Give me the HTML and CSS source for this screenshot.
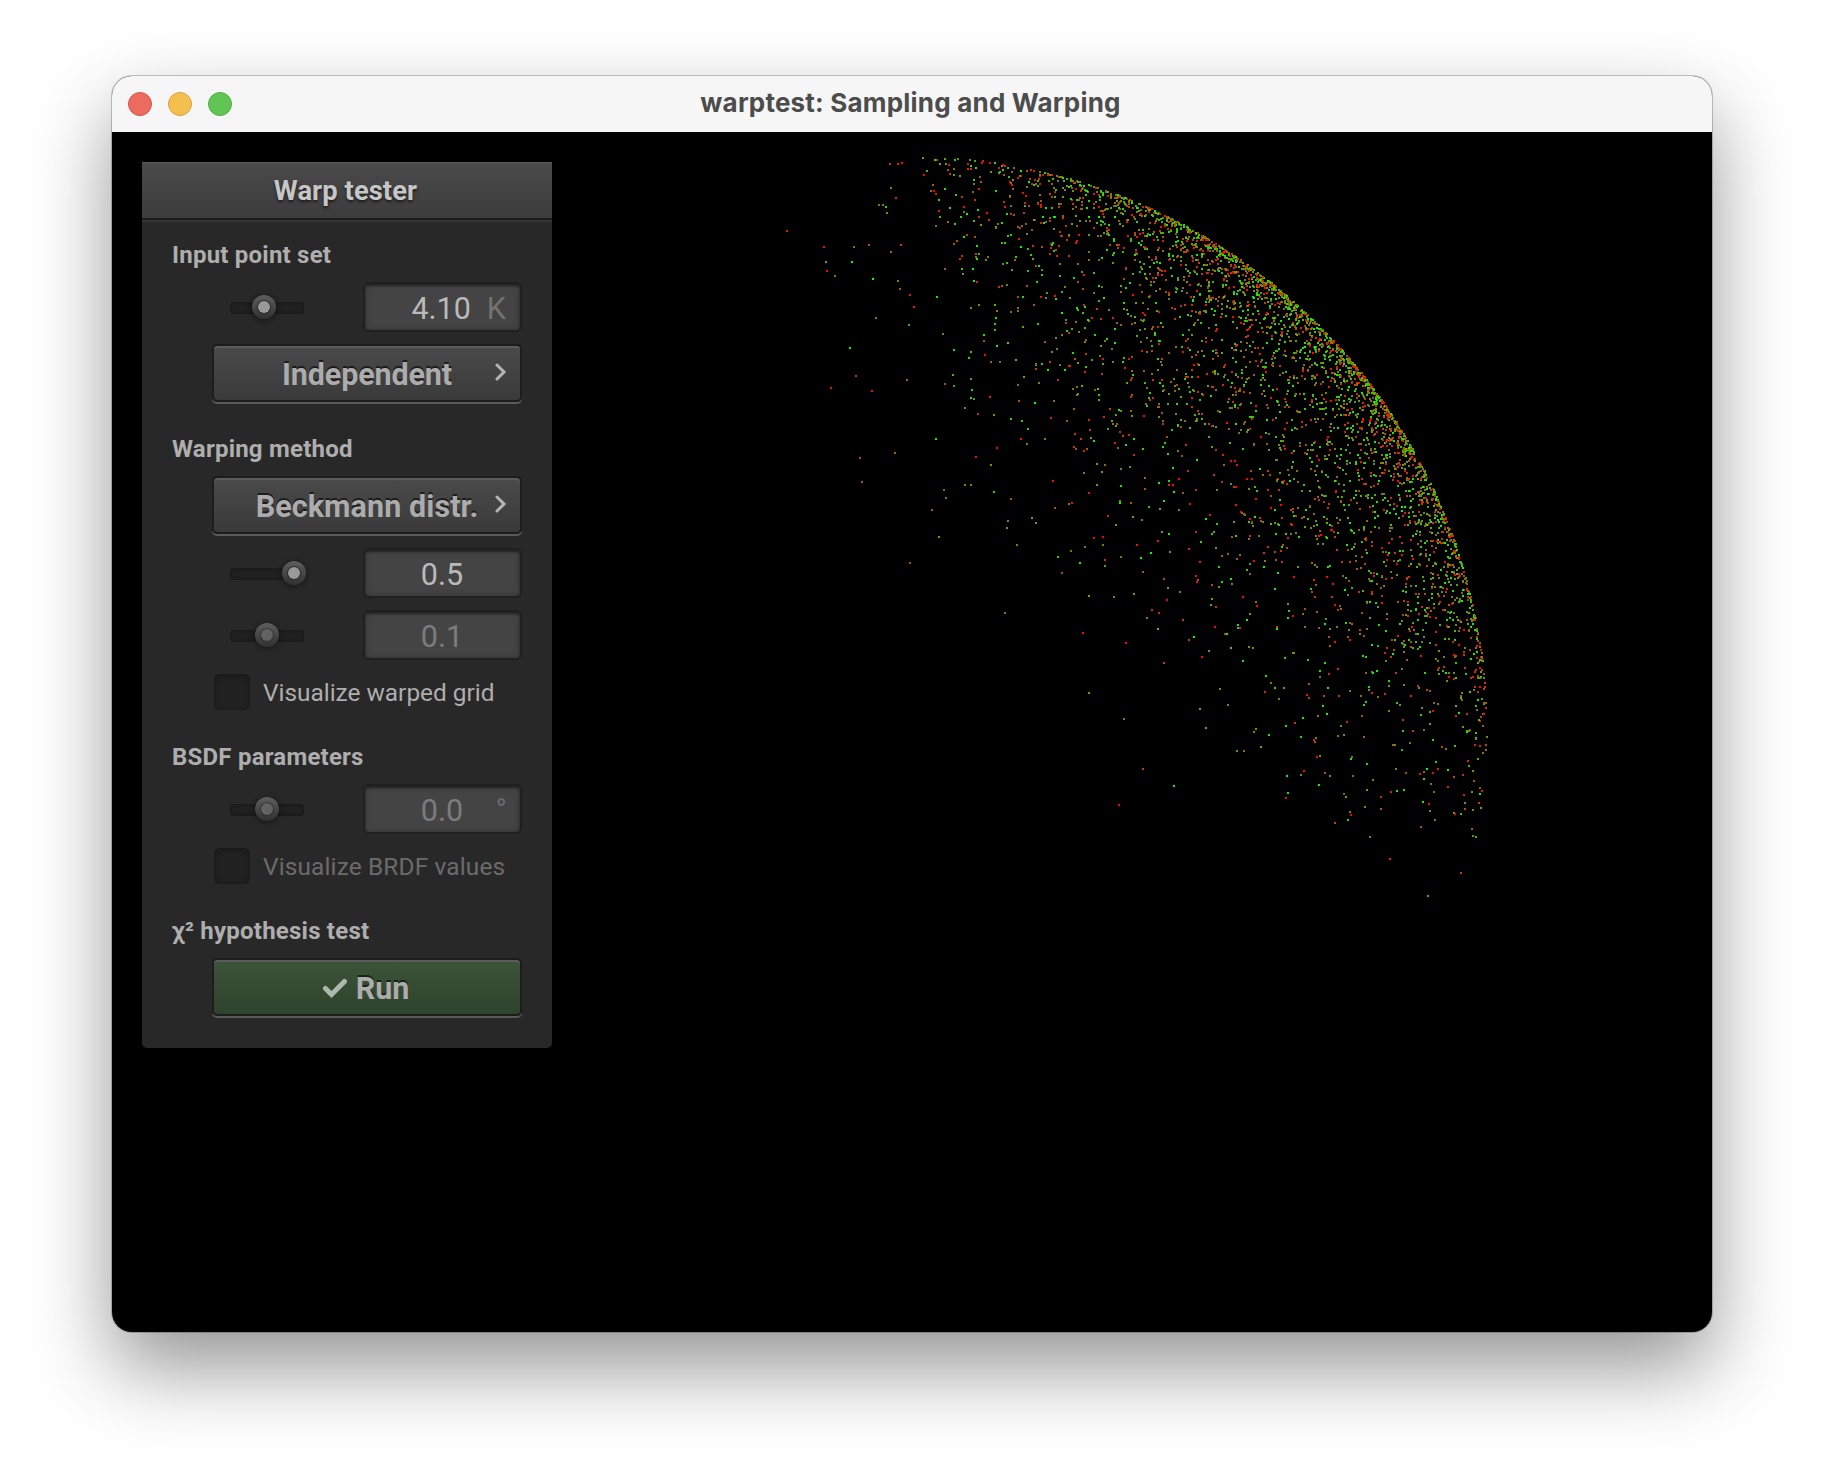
FILE: index.html
```html
<!DOCTYPE html>
<html lang="en">
<head>
<meta charset="utf-8">
<title>warptest: Sampling and Warping</title>
<link rel="stylesheet" href="styles.css">
</head>
<body>
<div class="window">
  <header class="titlebar">
    <div class="lights"><span class="light red"></span><span class="light yellow"></span><span class="light green"></span></div>
    <h1 class="window-title">warptest: Sampling and Warping</h1>
  </header>
  <main class="viewport">
    <canvas class="points" id="points" width="1600" height="1200"></canvas>
    <section class="panel">
      <h2 class="panel-title"><span>Warp tester</span></h2>
      <div class="panel-body">
        <h3 class="label"><span>Input point set</span></h3>
        <div class="row">
          <div class="slider"><span class="knob" style="left:22px"></span></div>
          <div class="field with-unit"><span>4.10</span><span class="unit">K</span></div>
        </div>
        <button class="button"><span>Independent</span><svg class="chevron" viewBox="0 0 12 18"><path d="M2 2l7 7-7 7"/></svg></button>

        <h3 class="label spaced"><span>Warping method</span></h3>
        <button class="button wide"><span>Beckmann distr.</span><svg class="chevron" viewBox="0 0 12 18"><path d="M2 2l7 7-7 7"/></svg></button>
        <div class="row">
          <div class="slider"><span class="knob" style="left:52px"></span></div>
          <div class="field"><span>0.5</span></div>
        </div>
        <div class="row disabled">
          <div class="slider"><span class="knob" style="left:25px"></span></div>
          <div class="field"><span>0.1</span></div>
        </div>
        <div class="check"><span class="box"></span><span class="check-text">Visualize warped grid</span></div>

        <h3 class="label spaced after-check"><span>BSDF parameters</span></h3>
        <div class="row disabled">
          <div class="slider"><span class="knob" style="left:25px"></span></div>
          <div class="field"><span>0.0</span><span class="degree">°</span></div>
        </div>
        <div class="check disabled"><span class="box"></span><span class="check-text">Visualize BRDF values</span></div>

        <h3 class="label spaced after-check"><span>χ² hypothesis test</span></h3>
        <button class="button run"><svg class="tick" viewBox="0 0 24 20"><path d="M2.5 10.5l6 6L21.500 3.500"/></svg><span>Run</span></button>
      </div>
    </section>
  </main>
</div>
<script src="points.js"></script>
</body>
</html>
```
FILE: styles.css
```css
* { box-sizing: border-box; }
body { margin: 0; padding: 76px 112px 148px; background: #fff; font-family: Roboto, "Liberation Sans", sans-serif; }
h1, h2, h3 { margin: 0; }

.window { width: 1600px; height: 1256px; border-radius: 20px; overflow: hidden; background: #000;
  box-shadow: 0 0 0 1px rgba(0,0,0,.22), 0 36px 80px rgba(0,0,0,.42); }
.titlebar { display: grid; grid-template-columns: 200px 1fr 200px; align-items: center; height: 56px; background: #f6f6f6; }
.lights { display: flex; gap: 16px; padding-left: 16px; }
.light { width: 24px; height: 24px; border-radius: 50%; border: 1px solid; }
.red { background: #ec6a5e; border-color: #d2554a; }
.yellow { background: #f4bf4f; border-color: #d6a243; }
.green { background: #61c554; border-color: #58a942; }
.window-title { text-align: center; font: 700 26px/54px Inter, sans-serif; color: #4c4c4c; letter-spacing: .2px; height: 56px; padding-right: 3px; }

.viewport { position: relative; height: 1200px; padding: 30px; }
.points { position: absolute; inset: 0; }
.panel { position: relative; width: 410px; height: 886px; background: #282828; border-radius: 2px 2px 5px 5px; }
.panel-title { height: 56px; background: linear-gradient(#4a4a4a, #3c3c3c); border-top: 1px solid #5c5c5c; text-align: center;
  font-size: 27.300px; line-height: 57px; font-weight: 700; color: #c6c6c6; letter-spacing: .1px; padding-right: 3px; text-shadow: 0 2px 3px rgba(0,0,0,.6);
  box-shadow: 0 2px 0 #1d1d1d, 0 4px 0 #353535; }
.panel-body { display: flex; flex-direction: column; gap: 12px; padding: 21px 30px 30px; }

.label { height: 32px; margin-bottom: -1px; font-size: 24px; line-height: 32px; font-weight: 700; color: #aeaeae; letter-spacing: .22px; white-space: nowrap; }
.label.spaced { margin-top: 17px; }
.label.after-check { margin-top: 19px; }

.row { display: flex; justify-content: space-between; align-items: center; height: 50px; padding: 0 0 0 58px; }
.slider { position: relative; top: 1px; width: 74px; height: 12px; border-radius: 4px; background: #202020; box-shadow: inset 0 0 3px 1px #1a1a1a; }
.knob { position: absolute; top: -7px; width: 24px; height: 24px; border-radius: 50%; background: linear-gradient(#5e5e5e, #303030);
  box-shadow: 0 1px 5px 1px rgba(0,0,0,.4); }
.knob::after { content: ""; position: absolute; inset: 6px; border-radius: 50%; background: #999; box-shadow: 0 0 0 1px rgba(25,25,25,.6); }
.disabled .knob::after { background: #626262; box-shadow: 0 0 0 1px rgba(40,40,40,.6); }

.field { position: relative; display: flex; justify-content: center; width: 159px; height: 50px; border: 2px solid #202020; border-top-color: #1f1f1f; border-radius: 6px;
  background: #444; box-shadow: inset 0 2px 2px #242424, inset 0 0 5px 1px #363636; font-size: 30.500px; line-height: 50px; color: #bababa; padding-right: 1px; }
.field.with-unit { justify-content: flex-end; gap: 16px; padding-right: 14px; }
.unit { color: #727272; }
.degree { position: absolute; right: 13px; top: 0; color: #6a6a6a; }
.disabled .field { color: #7c7c7c; }

.button { position: relative; display: flex; justify-content: center; align-items: center; gap: 9px; width: 310px; height: 58px; margin: 0 0 2px 40px; padding: 0;
  border: 2px solid #1d1d1d; border-radius: 5px; background: linear-gradient(#4a4a4a, #3a3a3a) padding-box;
  box-shadow: inset 0 2px 0 #5c5c5c, 0 2px 0 #5a5a5a;
  font: 700 30.500px/54px Roboto, sans-serif; letter-spacing: -.15px; color: #acacac; text-shadow: 0 -2px 0 #1c1c1c; }
.button.wide { letter-spacing: .08px; }
.button span { padding-top: 4px; line-height: 50px; }
.chevron { position: absolute; right: 13px; top: 17px; width: 12px; height: 18px; fill: none; stroke: #b4b4b4; stroke-width: 3; stroke-linecap: round; }
.run { background: linear-gradient(#3c543a, #2d432b) padding-box; text-shadow: 0 -2px 0 #162415; padding-right: 2px; }
.tick { width: 24px; height: 20px; margin-top: 2px; fill: none; stroke: #adb8ac; stroke-width: 5; stroke-linecap: round; }

.check { display: flex; align-items: center; gap: 13px; height: 36px; margin: 2px 0 0 42px; white-space: nowrap; font-size: 24.400px; line-height: 36px; color: #aeaeae; }
.check-text { padding-top: 2px; }
.box { width: 36px; height: 36px; border-radius: 6px; background: #212121; box-shadow: inset 0 1px 4px 1px #181818; }
.check.disabled { color: #6b6b6b; letter-spacing: .15px; }
```
FILE: points.js
```js
// Samples of a Beckmann lobe on the unit sphere, seen through a perspective camera.
const ctx = document.getElementById('points').getContext('2d');
const ORIGIN = { x: 112, y: 132 };

function plot(x, y, red) {
  ctx.fillStyle = `rgb(${Math.round(255 * red)},${Math.round(255 * (1 - red))},0)`;
  ctx.fillRect(x - ORIGIN.x, y - ORIGIN.y, 2, 2);
}

// Isolated samples in the tail of the lobe: x, y, share of red in percent.
const tail = `889,163,80 897,163,85 901,162,100 890,187,45 895,197,85 878,204,55 882,204,50 885,206,15 886,212,40
786,230,85 823,246,95 853,246,55 868,244,75 900,244,80 890,251,55 825,261,30 851,261,0 826,270,90 834,275,55
872,278,0 897,280,50 899,288,70 909,294,90 913,306,100 875,317,50 908,324,35 849,347,5 855,375,75 906,379,55
830,387,95 871,390,95 894,452,65 859,457,70 861,481,65 931,509,65 938,536,35 909,562,70 943,489,65 945,497,55
964,484,45 970,484,45 990,464,35 975,456,95 996,447,100 993,491,15 1010,498,65 1026,443,50 1007,520,50
1006,527,35 1016,544,50 1031,517,25 1035,522,35 1004,612,50 1052,480,95 1054,507,65 1057,556,15 1061,572,75
1070,550,55 1068,503,55 1071,502,100 1073,446,80 1075,448,70 1083,450,90 1086,448,65 1093,440,10 1083,472,50
1096,463,35 1104,464,60 1101,471,30 1096,484,30 1088,492,90 1079,562,0 1084,546,55 1093,537,100 1102,536,100
1102,544,50 1107,515,90 1104,559,85 1104,565,35 1115,524,30 1114,442,90 1117,447,60 1088,595,30 1113,596,50
1082,632,95 1088,692,30 1119,500,45 1119,502,0 1125,642,100 1123,718,50 1163,662,75 1201,656,95
1208,650,35 1230,647,15 1248,646,40 1252,647,40 1242,660,15 1219,688,40 1227,704,50 1199,708,30 1205,727,30
1253,731,45 1255,728,35 1236,750,40 1243,750,60 1142,768,75 1173,785,5 1118,804,100 1260,746,30 1286,775,5
1300,774,45 1303,770,100 1316,756,100 1319,755,40 1324,772,65 1329,775,40 1318,784,5 1287,792,10 1285,797,95
1350,758,5 1351,756,55 1366,763,15 1352,775,65 1372,779,50 1366,789,35 1343,793,70 1345,796,30 1364,806,40
1349,811,50 1350,814,100 1347,819,20 1334,822,70 1380,796,85 1380,808,60 1390,791,85 1396,790,5 1403,789,10
1395,768,40 1405,772,75 1401,749,30 1419,773,95 1423,771,65 1423,778,10 1426,768,0 1432,772,100 1437,768,90
1435,761,15 1447,769,5 1430,783,55 1433,791,65 1422,801,10 1428,803,95 1429,810,45 1434,819,50 1420,826,70
1447,786,90 1453,776,65 1462,774,85 1467,760,85 1468,765,35 1472,770,35 1477,758,30 1473,780,65 1479,787,70
1481,790,95 1479,793,5 1471,791,40 1463,794,90 1478,802,80 1480,807,25 1464,802,35 1464,808,65 1472,809,40
1460,813,25 1453,812,30 1454,813,100 1471,828,65 1472,835,40 1475,836,30 1369,836,50 1389,858,90 1460,872,75
1427,895,30 1445,748,50 1441,746,70 1479,745,90 1485,749,55 1482,752,50 1454,745,25
922,157,35 934,159,15 936,159,80 954,159,15 926,170,30 923,174,100 932,184,65 930,190,50 933,190,100 948,164,95`;

const inTail = (x, y) => x < 935 || (x < 1120 && y >= 440) || (x < 1260 && y >= 640) || y >= 745;

let seed = 20;
function random() {
  seed = (seed + 0x6D2B79F5) | 0;
  let t = Math.imul(seed ^ (seed >>> 15), 1 | seed);
  t = (t + Math.imul(t ^ (t >>> 7), 61 | t)) ^ t;
  return ((t ^ (t >>> 14)) >>> 0) / 4294967296;
}

const COUNT = 4096, ALPHA = 0.5;
const TILT = 33 * Math.PI / 180, TURN = 42 * Math.PI / 180;
const CAMERA = 4, FOCAL = 2227, CENTER = { x: 912, y: 732 };

for (let i = 0; i < COUNT; i++) {
  const theta = Math.atan(Math.sqrt(-ALPHA * ALPHA * Math.log(1 - random())));
  const phi = 2 * Math.PI * random();
  const red = random();
  const s = Math.sin(theta) * Math.cos(phi), t = Math.sin(theta) * Math.sin(phi), n = Math.cos(theta);
  const along = n * Math.cos(TILT) - s * Math.sin(TILT);
  const z = n * Math.sin(TILT) + s * Math.cos(TILT);
  const scale = FOCAL / (CAMERA - z);
  const x = Math.round(CENTER.x + scale * (along * Math.cos(TURN) - t * Math.sin(TURN))) - 1;
  const y = Math.round(CENTER.y - scale * (along * Math.sin(TURN) + t * Math.cos(TURN))) - 1;
  if (!inTail(x, y)) plot(x, y, red);
}
for (const entry of tail.split(/\s+/)) {
  const [x, y, red] = entry.split(',').map(Number);
  plot(x, y, red / 100);
}
```
